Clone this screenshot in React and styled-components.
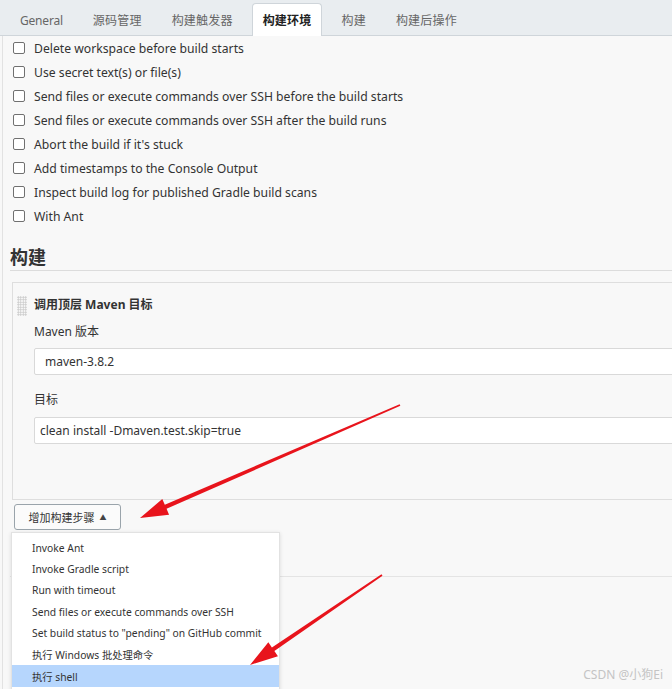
import React from "react";
import styled, { createGlobalStyle } from "styled-components";

const GlobalStyle = createGlobalStyle`
  html, body { margin: 0; padding: 0; background: #f8f8f8; }
  body {
    font-family: "Noto Sans", "Noto Sans CJK SC", sans-serif;
    color: #333;
  }
  * { box-sizing: border-box; }
`;

const Page = styled.div`
  position: relative;
  width: 100%;
  height: 689px;
  overflow: hidden;
  background: #f8f8f8;
`;

const TabBar = styled.div`
  height: 36px;
  display: flex;
  align-items: flex-end;
  padding-left: 5px;
  background: #e9edf0;
  border-bottom: 1px solid #cfd5da;
`;

const Tab = styled.div`
  height: 33px;
  margin: 0 4px -1px;
  padding: 0 10px;
  display: flex;
  align-items: center;
  font-size: 12px;
  letter-spacing: ${(p) => (p.$latin ? "-0.2px" : "0.2px")};
  color: ${(p) => (p.$active ? "#222" : "#666")};
  font-weight: ${(p) => (p.$active ? 600 : 400)};
  background: ${(p) => (p.$active ? "#fff" : "transparent")};
  border: 1px solid ${(p) => (p.$active ? "#cfd5da" : "transparent")};
  border-bottom: none;
  border-radius: 4px 4px 0 0;
`;

const Main = styled.div`
  margin-left: 2px;
  border-left: 1px solid #e2e2e2;
  padding-left: 7px;
  height: 653px;
`;

const CheckList = styled.div`
  display: flex;
  flex-direction: column;
`;

const CheckRow = styled.label`
  height: 24px;
  display: flex;
  align-items: center;
  gap: 9px;
  font-size: 12.2px;
  color: #333;
`;

const Box = styled.input.attrs({ type: "checkbox" })`
  appearance: none;
  margin: 0 0 0 3px;
  width: 12px;
  height: 12px;
  border: 1px solid #707070;
  border-radius: 2px;
  background: #fff;
`;

const SectionTitle = styled.h2`
  margin: 16px 0 0;
  font-size: 18px;
  line-height: 26px;
  font-weight: 700;
  color: #333;
  border-bottom: 1px solid #dcdcdc;
`;

const StepBox = styled.div`
  margin: 11px -20px 0 2px;
  border: 1px solid #dedede;
  padding: 10px 0 55px 4px;
  height: 218px;
`;

const StepHeader = styled.div`
  display: flex;
  align-items: center;
  gap: 7px;
  height: 22px;
`;

const Handle = styled.div`
  width: 10px;
  height: 20px;
  margin-top: 4px;
  background-image: radial-gradient(circle, #c8c8c8 0.8px, transparent 1px);
  background-size: 2.5px 2.5px;
`;

const StepTitle = styled.div`
  font-size: 12px;
  font-weight: 700;
  color: #333;
`;

const Fields = styled.div`
  padding-left: 17px;
`;

const FieldLabel = styled.div`
  margin-top: ${(p) => p.$top}px;
  font-size: 12px;
  line-height: 20px;
  color: #333;
`;

const Field = styled.div`
  margin-top: ${(p) => p.$top}px;
  height: 27px;
  display: flex;
  align-items: center;
  padding-left: ${(p) => p.$indent}px;
  background: #fff;
  border: 1px solid #d9d9d9;
  border-radius: 2px;
  font-size: 12px;
  color: #333;
`;

const ButtonWrap = styled.div`
  position: relative;
  margin: 4px 0 0 4px;
  width: 107px;
`;

const AddButton = styled.div`
  height: 26px;
  display: flex;
  align-items: center;
  justify-content: center;
  gap: 5px;
  font-size: 11px;
  color: #333;
  background: #fbfbfb;
  border: 1px solid #9aa4ab;
  border-radius: 3px;
`;

const Caret = styled.span`
  font-size: 7px;
  color: #444;
`;

const Menu = styled.div`
  position: absolute;
  top: 28px;
  left: -3px;
  width: 269px;
  padding-top: 4px;
  height: 170px;
  background: #fff;
  border: 1px solid #e2e2e2;
  box-shadow: 0 1px 4px rgba(0, 0, 0, 0.12);
`;

const MenuItem = styled.div`
  height: 21.4px;
  display: flex;
  align-items: center;
  padding-left: 20px;
  font-size: 10.3px;
  color: #333;
  background: ${(p) => (p.$selected ? "#b6d6fd" : "transparent")};
`;

const Divider = styled.div`
  margin-top: 46px;
  border-top: 1px solid #e4e4e4;
`;

const Overlay = styled.svg`
  position: absolute;
  left: 0;
  top: 0;
  pointer-events: none;
`;

const Watermark = styled.div`
  position: absolute;
  right: 9px;
  bottom: 6px;
  font-size: 12px;
  color: #c4c4c4;
`;

const tabs = ["General", "源码管理", "构建触发器", "构建环境", "构建", "构建后操作"];
const options = [
  "Delete workspace before build starts",
  "Use secret text(s) or file(s)",
  "Send files or execute commands over SSH before the build starts",
  "Send files or execute commands over SSH after the build runs",
  "Abort the build if it's stuck",
  "Add timestamps to the Console Output",
  "Inspect build log for published Gradle build scans",
  "With Ant",
];
const menuItems = [
  "Invoke Ant",
  "Invoke Gradle script",
  "Run with timeout",
  "Send files or execute commands over SSH",
  'Set build status to "pending" on GitHub commit',
  "执行 Windows 批处理命令",
  "执行 shell",
];

function Arrow({ tail, tip }) {
  const dx = tail[0] - tip[0];
  const dy = tail[1] - tip[1];
  const len = Math.hypot(dx, dy);
  const ux = dx / len;
  const uy = dy / len;
  const px = -uy;
  const py = ux;
  const head = 28;
  const hw = 8.5;
  const bx = tip[0] + ux * head;
  const by = tip[1] + uy * head;
  const sw = 2.2;
  const tw = 0.9;
  const pts = [
    [tip[0], tip[1]],
    [bx + px * hw, by + py * hw],
    [bx + px * sw, by + py * sw],
    [tail[0] + px * tw, tail[1] + py * tw],
    [tail[0] - px * tw, tail[1] - py * tw],
    [bx - px * sw, by - py * sw],
    [bx - px * hw, by - py * hw],
  ];
  return <polygon points={pts.map((p) => p.join(",")).join(" ")} fill="#e8141c" />;
}

export default function App() {
  return (
    <>
      <GlobalStyle />
      <Page>
        <TabBar>
          {tabs.map((t) => (
            <Tab key={t} $active={t === "构建环境"} $latin={t === "General"}>
              {t}
            </Tab>
          ))}
        </TabBar>
        <Main>
          <CheckList>
            {options.map((o) => (
              <CheckRow key={o}>
                <Box />
                {o}
              </CheckRow>
            ))}
          </CheckList>
          <SectionTitle>构建</SectionTitle>
          <StepBox>
            <StepHeader>
              <Handle />
              <StepTitle>调用顶层 Maven 目标</StepTitle>
            </StepHeader>
            <Fields>
              <FieldLabel $top={7}>Maven 版本</FieldLabel>
              <Field $top={6} $indent={10}>maven-3.8.2</Field>
              <FieldLabel $top={15}>目标</FieldLabel>
              <Field $top={7} $indent={5}>clean install -Dmaven.test.skip=true</Field>
            </Fields>
          </StepBox>
          <ButtonWrap>
            <AddButton>
              增加构建步骤 <Caret>▲</Caret>
            </AddButton>
            <Menu>
              {menuItems.map((m) => (
                <MenuItem key={m} $selected={m === "执行 shell"}>
                  {m}
                </MenuItem>
              ))}
            </Menu>
          </ButtonWrap>
          <Divider />
        </Main>
        <Overlay width="672" height="689" viewBox="0 0 672 689">
          <Arrow tail={[400, 405]} tip={[140, 518]} />
          <Arrow tail={[382, 575]} tip={[250, 665]} />
        </Overlay>
        <Watermark>CSDN @小狗Ei</Watermark>
      </Page>
    </>
  );
}
